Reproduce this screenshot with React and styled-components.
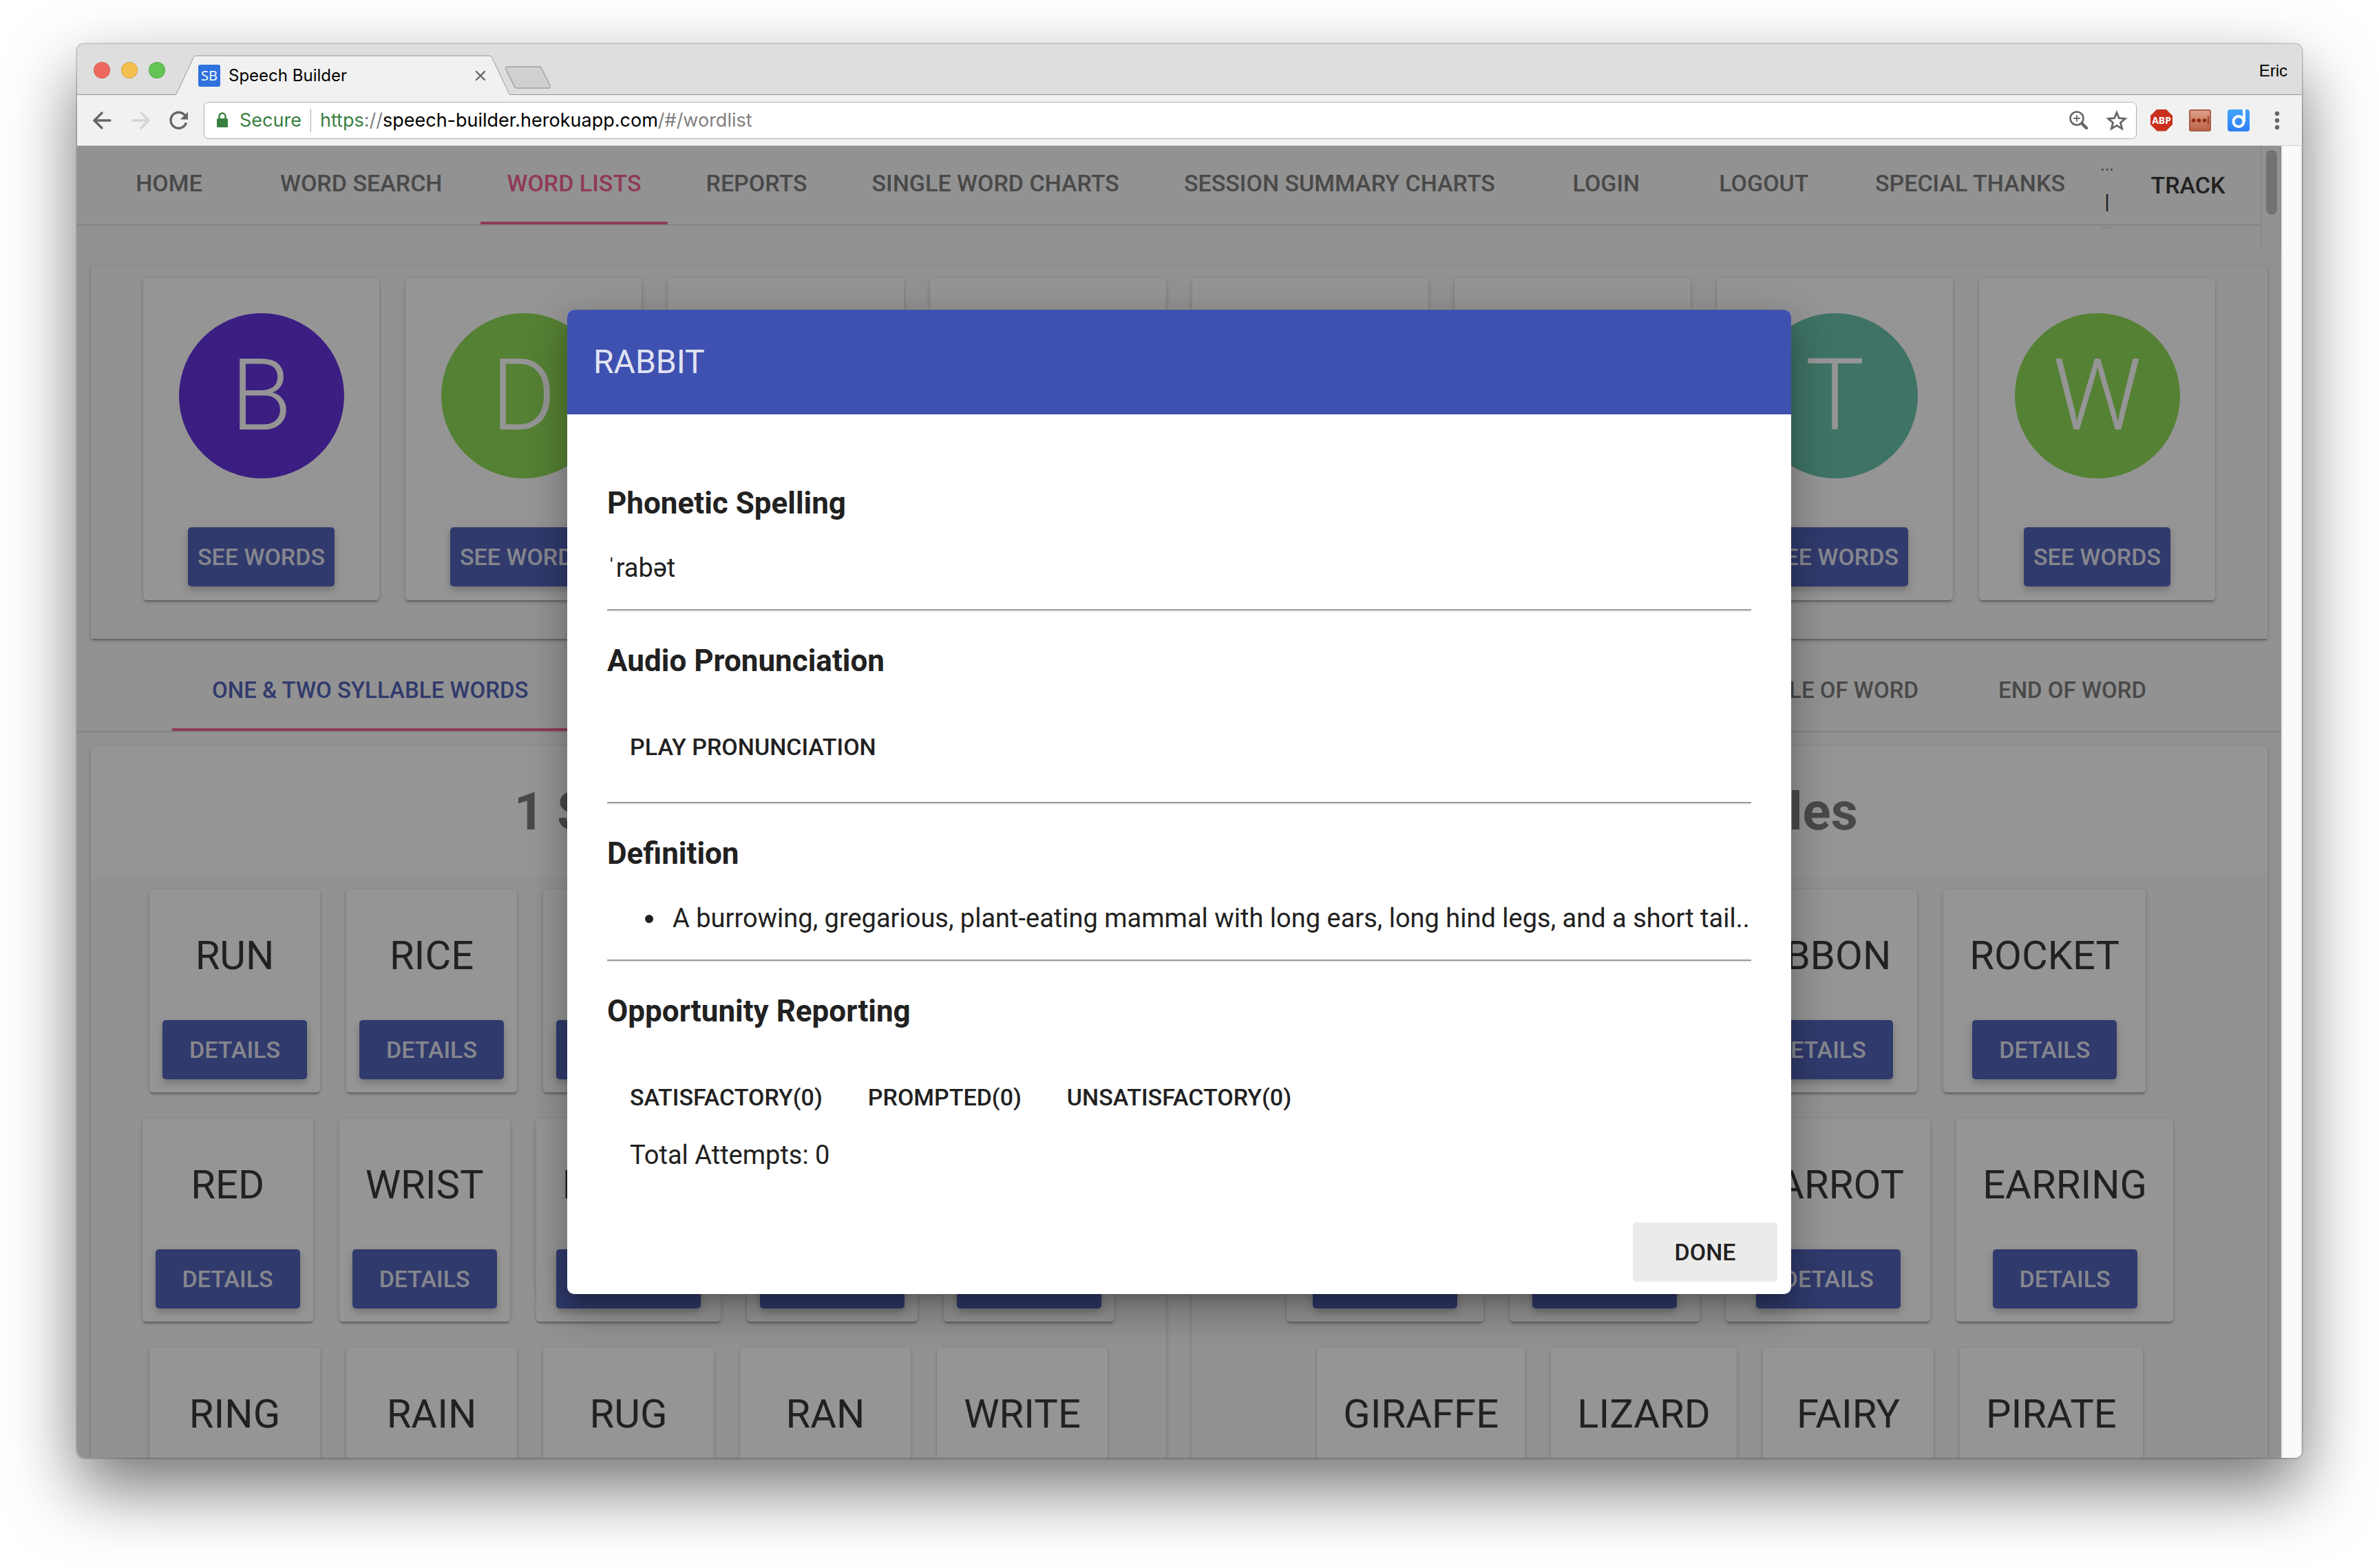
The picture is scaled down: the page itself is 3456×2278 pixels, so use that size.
import React from "react";
import styled, { createGlobalStyle, css } from "styled-components";

const color = {
  primary: "#3f51b0",
  accent: "#f45288",
  page: "#fafafa",
  ink: "#212121",
  muted: "#6e6e6e",
  rule: "#dcdcdc",
};

const shadow = {
  card: "0 2px 7px rgba(0,0,0,.2), 0 2px 2px rgba(0,0,0,.14), 0 5px 2px -2px rgba(0,0,0,.12)",
  button: "0 5px 12px rgba(0,0,0,.26)",
  dialog:
    "0 17px 19px -10px rgba(0,0,0,.2), 0 31px 46px 5px rgba(0,0,0,.14), 0 12px 58px 10px rgba(0,0,0,.12)",
};

const GlobalStyle = createGlobalStyle`
  *, *::before, *::after { box-sizing: border-box; }
  body {
    margin: 0;
    background: #fff;
    color: ${color.ink};
    font-family: Roboto, "Liberation Sans", sans-serif;
  }
  button, input { font: inherit; color: inherit; border: 0; background: none; padding: 0; margin: 0; }
  button { cursor: pointer; }
  a { color: inherit; text-decoration: none; }
  h1, h2, h3, p, ul { margin: 0; padding: 0; font-weight: inherit; }
`;

/* ---------- browser window ---------- */

const Desktop = styled.div`
  height: 100vh;
  padding: 64px 112px 160px;
  overflow: hidden;
`;

const Window = styled.div`
  height: 100%;
  display: flex;
  flex-direction: column;
  overflow: hidden;
  border-radius: 10px;
  background: #f1f1f1;
  box-shadow: 0 0 2px 1px rgba(0, 0, 0, 0.3), 0 44px 100px rgba(0, 0, 0, 0.55);
`;

const TabStrip = styled.div`
  display: flex;
  align-items: flex-end;
  height: 74px;
  padding: 0 21px 0 24px;
  background: #dedede;
  box-shadow: inset 0 -1px 0 #989898;
`;

const Lights = styled.div`
  display: flex;
  gap: 16px;
  align-self: center;
  padding: 2px 16px 0 0;
`;

const Light = styled.button`
  width: 24px;
  height: 24px;
  border-radius: 50%;
  background: ${(p) => p.$fill};
  border: 1px solid rgba(0, 0, 0, 0.12);
`;

const BrowserTab = styled.div`
  position: relative;
  display: flex;
  align-items: center;
  gap: 12px;
  width: 484px;
  height: 58px;
  padding: 2px 34px 0 32px;
  font-size: 24px;
  line-height: 28px;
  color: #000;
`;

const TabShape = styled.svg`
  position: absolute;
  inset: 0;
  width: 100%;
  height: 100%;
`;

const Favicon = styled.span`
  position: relative;
  width: 32px;
  height: 32px;
  border-radius: 3px;
  background: #2f72de;
  color: #fff;
  font: 20px/32px "Open Sans", sans-serif;
  text-align: center;
`;

const TabTitle = styled.span`
  position: relative;
  flex: 1;
  font-family: Inter, sans-serif;
`;

const IconButton = styled.button`
  position: relative;
  display: flex;
  align-items: center;
  justify-content: center;
  color: ${(p) => p.$tone || "#666"};
`;

const NewTab = styled(IconButton)`
  align-self: flex-end;
  margin: 0 0 8px -7px;
`;

const UserName = styled.button`
  margin-left: auto;
  align-self: center;
  padding-top: 4px;
  font: 24px/28px "Liberation Sans", sans-serif;
  color: #000;
`;

const Toolbar = styled.div`
  display: flex;
  align-items: center;
  height: 74px;
  padding: 0 20px;
  border-bottom: 1px solid #cfcfcf;
`;

const History = styled.div`
  display: flex;
  gap: 20px;
  padding-right: 20px;
`;

const AddressBar = styled.form`
  flex: 1;
  display: flex;
  align-items: center;
  height: 54px;
  padding: 0 12px 0 17px;
  border: 1px solid #b0b0b0;
  border-radius: 7px;
  background: #fff;
  font: 27px/34px Inter, sans-serif;
`;

const Secure = styled.span`
  display: flex;
  align-items: center;
  gap: 16px;
  padding-right: 13px;
  border-right: 1px solid #a8a8a8;
  margin-right: 13px;
  color: #38803f;
`;

const UrlLabel = styled.label`
  color: #808080;
`;

const Origin = styled.span`
  color: ${(p) => (p.$scheme ? "#38803f" : "#000")};
`;

const UrlInput = styled.input`
  flex: 1;
  min-width: 0;
  color: #808080;
  outline: 0;
`;

const AddressActions = styled.div`
  display: flex;
  gap: 24px;
`;

const Extensions = styled.div`
  display: flex;
  align-items: center;
  gap: 24px;
  padding-left: 20px;
`;

const Abp = styled(IconButton)`
  width: 32px;
  height: 32px;
  clip-path: polygon(30% 0, 70% 0, 100% 30%, 100% 70%, 70% 100%, 30% 100%, 0 70%, 0 30%);
  background: #c9301c;
  color: #fff;
  font: bold 14px/32px "Noto Sans", sans-serif;
`;

const Menu = styled(IconButton)`
  width: 32px;
`;

/* ---------- page ---------- */

const Viewport = styled.div`
  position: relative;
  flex: 1;
  min-height: 0;
  display: flex;
  overflow: hidden;
  background: ${color.page};
`;

const Page = styled.div`
  position: relative;
  flex: 1;
  min-width: 0;
  overflow: hidden;
  background: ${color.page};
`;

const OuterTrack = styled.div`
  width: 30px;
  border-left: 2px solid #e8e8e8;
  border-right: 2px solid #ececec;
  background: ${color.page};
`;

const TopRow = styled.header`
  display: flex;
  align-items: flex-start;
`;

const tabBar = css`
  display: flex;
  height: 116px;
  border-bottom: 2px solid ${color.rule};
`;

const NavBar = styled.nav`
  ${tabBar}
  flex: 1;
  min-width: 0;
  gap: 18px;
  padding-left: 28px;
`;

const tabItem = css`
  display: flex;
  align-items: center;
  justify-content: center;
  flex: none;
  height: 114px;
  border-bottom: 4px solid ${(p) => (p.$active ? color.accent : "transparent")};
  font-weight: 500;
  line-height: 40px;
  white-space: nowrap;
`;

const NavLink = styled.a`
  ${tabItem}
  min-width: 211px;
  padding: 0 38px 2px;
  font-size: 34px;
  color: ${(p) => (p.$active ? color.accent : color.muted)};
`;

const MiniNav = styled.div`
  flex: none;
  width: 16px;
  height: 120px;
  margin: 0 -14px 0 -3px;
  padding-top: 10px;
  border-bottom: 2px solid ${color.rule};
  text-align: center;
  font-size: 30px;
  font-weight: 500;
`;

const MiniLink = styled.a`
  display: flex;
  justify-content: center;
  height: 56px;
  line-height: 36px;
  font-size: 24px;
  color: ${color.muted};
`;

const Divider = styled.span`
  display: block;
  line-height: 30px;
`;

const TrackButton = styled.button`
  flex: none;
  width: 211px;
  height: 114px;
  margin-left: auto;
  font-size: 34px;
  font-weight: 500;
  line-height: 40px;
`;

const InnerTrack = styled.div`
  flex: none;
  width: 30px;
  height: 154px;
  padding: 6px 0 0 6px;
  border-left: 2px solid #ececec;
  border-right: 2px solid #ececec;
`;

const Thumb = styled.div`
  width: 16px;
  height: 94px;
  border-radius: 8px;
  background: #bdbdbd;
`;

const LetterPanel = styled.section`
  display: grid;
  grid-template-columns: repeat(8, 1fr);
  gap: 38px;
  margin: 20px 20px 0;
  padding: 18px 76px 56px;
  box-shadow: ${shadow.card};
`;

const Card = styled.article`
  display: flex;
  flex-direction: column;
  align-items: center;
  border-radius: 5px;
  background: #fff;
  box-shadow: ${shadow.card};
`;

const LetterCard = styled(Card)`
  gap: 71px;
  padding: 51px 0 20px;
`;

const Letter = styled.h2`
  width: 240px;
  border-radius: 50%;
  background: ${(p) => p.$fill};
  color: #fff;
  font-size: 144px;
  font-weight: 300;
  line-height: 240px;
  text-align: center;
`;

const RaisedButton = styled.button`
  min-width: 210px;
  padding: 0 14px;
  border-radius: 5px;
  background: ${color.primary};
  box-shadow: ${shadow.button};
  color: rgba(255, 255, 255, 0.87);
  font-size: 34px;
  font-weight: 500;
  line-height: 86px;
  white-space: nowrap;
`;

const FilterTabs = styled.nav`
  ${tabBar}
  justify-content: space-between;
  margin-top: 20px;
  padding: 0 138px;
`;

const TabGroup = styled.div`
  display: flex;
`;

const FilterTab = styled.button`
  ${tabItem}
  padding: 0 58px;
  border-bottom: 4px solid ${(p) => (p.$active ? color.accent : "transparent")};
  font-size: 33px;
  color: ${(p) => (p.$active ? color.primary : color.muted)};
`;

const Lists = styled.main`
  display: grid;
  grid-template-columns: 1fr 1fr;
  gap: 38px;
  margin: 20px 20px 0;
`;

const ListPanel = styled.section`
  border-radius: 5px;
  box-shadow: ${shadow.card};
`;

const ListTitle = styled.h2`
  background: #fff;
  color: ${color.muted};
  font-size: 76px;
  font-weight: 700;
  line-height: 190px;
  text-align: center;
`;

const WordRows = styled.div`
  display: flex;
  flex-direction: column;
  gap: 38px;
  padding: 18px 0 38px;
`;

const WordRow = styled.div`
  display: flex;
  justify-content: center;
  gap: 38px;
`;

const WordCard = styled(Card)`
  gap: 60px;
  padding: 62px 19px 19px;
`;

const Word = styled.h3`
  padding: 0 19px;
  font-size: 58px;
  line-height: 68px;
`;

/* ---------- dialog ---------- */

const Backdrop = styled.div`
  position: absolute;
  inset: 0;
  display: flex;
  align-items: center;
  justify-content: center;
  background: rgba(33, 33, 33, 0.48);
`;

const Dialog = styled.div`
  width: 1778px;
  max-width: 90%;
  overflow: hidden;
  border-radius: 10px;
  background: #fff;
  box-shadow: ${shadow.dialog};
`;

const DialogTitle = styled.h1`
  padding: 0 38px;
  background: ${color.primary};
  color: rgba(255, 255, 255, 0.87);
  font-size: 48px;
  line-height: 152px;
`;

const DialogBody = styled.div`
  padding: 58px 58px 0;
`;

const Section = styled.section`
  padding: 45px 0 37px;

  & + & {
    border-top: 2px solid #9a9a9a;
    box-shadow: inset 0 2px 0 #eee;
    padding-top: 47px;
  }
`;

const SectionTitle = styled.h3`
  margin-bottom: 45px;
  font-size: 44px;
  font-weight: 700;
  line-height: 53px;
`;

const Text = styled.p`
  font-size: 38px;
  line-height: 45px;
`;

const Definitions = styled.ul`
  padding-left: 55px;
  font-size: 38px;
  line-height: 45px;
  list-style: none;
`;

const Definition = styled.li`
  display: flex;
  align-items: center;
  gap: 28px;
  white-space: nowrap;

  &::before {
    content: "";
    width: 12px;
    height: 12px;
    border-radius: 50%;
    background: ${color.ink};
  }
`;

const FlatRow = styled.div`
  display: flex;
  gap: 38px;
  padding: 10px 19px 0;
`;

const FlatButton = styled.button`
  min-width: 210px;
  padding: 0 14px;
  border-radius: 5px;
  background: ${(p) => (p.$filled ? "#ebebeb" : "transparent")};
  font-size: 34px;
  font-weight: 500;
  line-height: 86px;
`;

const Attempts = styled(Text)`
  padding: 19px 33px 0;
`;

const DialogActions = styled.footer`
  display: flex;
  justify-content: flex-end;
  padding: 38px 20px 18px;
`;

/* ---------- icons ---------- */

const Stroke = ({ w, h, children, sw = 3.4 }) => (
  <svg
    width={w}
    height={h}
    viewBox={`0 0 ${w} ${h}`}
    fill="none"
    stroke="currentColor"
    strokeWidth={sw}
    strokeLinecap="round"
  >
    {children}
  </svg>
);

const BackIcon = () => (
  <Stroke w={36} h={32}>
    <path d="M28 16H5M16 5 5 16l11 11" />
  </Stroke>
);
const ForwardIcon = () => (
  <Stroke w={36} h={32}>
    <path d="M5 16h23M17 5l11 11-11 11" />
  </Stroke>
);
const ReloadIcon = () => (
  <Stroke w={32} h={32}>
    <path d="M26 20.5A11.500 11.500 0 1 1 24.500 8.500" />
    <path d="M29 3.500v11H18z" fill="currentColor" stroke="none" />
  </Stroke>
);
const LockIcon = () => (
  <svg width="18" height="24" viewBox="0 0 18 24" fill="none">
    <rect x="1" y="9" width="16" height="13" rx="1.5" fill="currentColor" />
    <path d="M4.5 9.5V6a4.5 4.5 0 0 1 9 0v3.5" stroke="currentColor" strokeWidth="2.4" />
  </svg>
);
const ZoomIcon = () => (
  <Stroke w={30} h={30} sw={2.6}>
    <circle cx="12" cy="12" r="9.5" />
    <path d="M12 8v8M8 12h8" strokeWidth="1.8" />
    <path d="m20 20 6 6" strokeWidth="4.4" />
  </Stroke>
);
const StarIcon = () => (
  <Stroke w={32} h={32} sw={2.8}>
    <path d="m16 4.5 3.400 8.200 8.900.7-6.800 5.800 2.100 8.700L16 23.300l-7.600 4.600 2.100-8.700-6.800-5.800 8.900-.7z" />
  </Stroke>
);
const DotsBadge = () => (
  <svg width="32" height="32" viewBox="0 0 32 32">
    <defs>
      <linearGradient id="clay" x1="0" y1="0" x2="0" y2="1">
        <stop offset="0" stopColor="#dfa18a" />
        <stop offset="1" stopColor="#bb6048" />
      </linearGradient>
    </defs>
    <rect x="1" y="1" width="30" height="30" rx="2" fill="url(#clay)" stroke="#a85c48" strokeWidth="2" />
    <g fill="#8e2a0c">
      <circle cx="6.5" cy="16" r="2.8" />
      <circle cx="14.5" cy="16" r="2.8" />
      <circle cx="22.5" cy="16" r="2.8" />
      <rect x="27" y="10" width="1.6" height="12" />
    </g>
  </svg>
);
const BlueBadge = () => (
  <svg width="32" height="32" viewBox="0 0 32 32" fill="none">
    <defs>
      <linearGradient id="sky" x1="0" y1="0" x2="0" y2="1">
        <stop offset="0" stopColor="#3fa6f8" />
        <stop offset="1" stopColor="#2f7df6" />
      </linearGradient>
    </defs>
    <rect width="32" height="32" rx="4" fill="url(#sky)" />
    <circle cx="16" cy="17.5" r="7.5" stroke="#fff" strokeWidth="4" />
    <path d="M24 0v18" stroke="#fff" strokeWidth="4" />
  </svg>
);
const MenuIcon = () => (
  <svg width="32" height="32" fill="currentColor">
    <circle cx="16" cy="6" r="3.2" />
    <circle cx="16" cy="16" r="3.2" />
    <circle cx="16" cy="26" r="3.2" />
  </svg>
);

/* ---------- data ---------- */

const navItems = [
  "HOME",
  "WORD SEARCH",
  "WORD LISTS",
  "REPORTS",
  "SINGLE WORD CHARTS",
  "SESSION SUMMARY CHARTS",
  "LOGIN",
  "LOGOUT",
  "SPECIAL THANKS",
];

const letters = [
  ["B", "#531cda"],
  ["D", "#84d845"],
  ["K", "#58bfa4"],
  ["L", "#84d845"],
  ["R", "#531cda"],
  ["S", "#84d845"],
  ["T", "#58bfa4"],
  ["W", "#84d845"],
];

const wordLists = [
  {
    title: "1 Syllable",
    rows: [
      ["RUN", "RICE", "RAKE", "ROAD", "READ"],
      ["RED", "WRIST", "ROUND", "RAT", "ROPE"],
      ["RING", "RAIN", "RUG", "RAN", "WRITE"],
    ],
  },
  {
    title: "2 Syllables",
    rows: [
      ["RADIO", "RABBIT", "RIBBON", "ROCKET"],
      ["FOREST", "ARROW", "CARROT", "EARRING"],
      ["GIRAFFE", "LIZARD", "FAIRY", "PIRATE"],
    ],
  },
];

const outcomes = ["SATISFACTORY(0)", "PROMPTED(0)", "UNSATISFACTORY(0)"];

/* ---------- parts ---------- */

function BrowserChrome() {
  return (
    <>
      <TabStrip>
        <Lights>
          <Light aria-label="Close window" $fill="#ee6a5e" />
          <Light aria-label="Minimise window" $fill="#f5bf4f" />
          <Light aria-label="Zoom window" $fill="#62c554" />
        </Lights>
        <BrowserTab>
          <TabShape viewBox="0 0 484 58" preserveAspectRatio="none">
            <path d="M0 57 25 4q1-3 4-3h426q3 0 4 3l25 53v1H0z" fill="#f1f1f1" />
            <path d="M0 57 25 4q1-3 4-3h426q3 0 4 3l25 53" fill="none" stroke="#989898" />
          </TabShape>
          <Favicon>SB</Favicon>
          <TabTitle>Speech Builder</TabTitle>
          <IconButton aria-label="Close tab">
            <Stroke w={16} h={16} sw={2.4}>
              <path d="m2 2 12 12M14 2 2 14" />
            </Stroke>
          </IconButton>
        </BrowserTab>
        <NewTab aria-label="New tab">
          <svg width="68" height="34" viewBox="0 0 68 34">
            <path
              d="M4 1h46q3 0 4 3l12 24q1 4-2 4H18q-3 0-4-3L2 5q-1-4 2-4z"
              fill="#d0d0d0"
              stroke="#a0a0a0"
              strokeWidth="1.4"
            />
          </svg>
        </NewTab>
        <UserName>Eric</UserName>
      </TabStrip>
      <Toolbar>
        <History>
          <IconButton aria-label="Back">
            <BackIcon />
          </IconButton>
          <IconButton aria-label="Forward" $tone="#d4d4d4">
            <ForwardIcon />
          </IconButton>
          <IconButton aria-label="Reload">
            <ReloadIcon />
          </IconButton>
        </History>
        <AddressBar onSubmit={(e) => e.preventDefault()}>
          <Secure>
            <LockIcon />
            Secure
          </Secure>
          <UrlLabel htmlFor="path">
            <Origin $scheme>https</Origin>://<Origin>speech-builder.herokuapp.com</Origin>
          </UrlLabel>
          <UrlInput id="path" defaultValue="/#/wordlist" />
          <AddressActions>
            <IconButton type="button" aria-label="Page zoom">
              <ZoomIcon />
            </IconButton>
            <IconButton type="button" aria-label="Bookmark this page">
              <StarIcon />
            </IconButton>
          </AddressActions>
        </AddressBar>
        <Extensions>
          <Abp>ABP</Abp>
          <IconButton aria-label="Passwords">
            <DotsBadge />
          </IconButton>
          <IconButton aria-label="Shortcuts">
            <BlueBadge />
          </IconButton>
          <Menu aria-label="Menu">
            <MenuIcon />
          </Menu>
        </Extensions>
      </Toolbar>
    </>
  );
}

function RabbitDialog() {
  return (
    <Dialog role="dialog" aria-modal="true" aria-labelledby="dialog-title">
      <DialogTitle id="dialog-title">RABBIT</DialogTitle>
      <DialogBody>
        <Section>
          <SectionTitle>Phonetic Spelling</SectionTitle>
          <Text>ˈrabət</Text>
        </Section>
        <Section>
          <SectionTitle>Audio Pronunciation</SectionTitle>
          <FlatRow>
            <FlatButton>PLAY PRONUNCIATION</FlatButton>
          </FlatRow>
        </Section>
        <Section>
          <SectionTitle>Definition</SectionTitle>
          <Definitions>
            <Definition>
              A burrowing, gregarious, plant-eating mammal with long ears, long hind legs, and a short tail..
            </Definition>
          </Definitions>
        </Section>
        <Section>
          <SectionTitle>Opportunity Reporting</SectionTitle>
          <FlatRow>
            {outcomes.map((label) => (
              <FlatButton key={label}>{label}</FlatButton>
            ))}
          </FlatRow>
          <Attempts>Total Attempts: 0</Attempts>
        </Section>
      </DialogBody>
      <DialogActions>
        <FlatButton $filled>DONE</FlatButton>
      </DialogActions>
    </Dialog>
  );
}

export default function App() {
  return (
    <Desktop>
      <GlobalStyle />
      <Window>
        <BrowserChrome />
        <Viewport>
          <Page>
            <TopRow>
              <NavBar>
                {navItems.map((item) => (
                  <NavLink key={item} href="#/" $active={item === "WORD LISTS"}>
                    {item}
                  </NavLink>
                ))}
                <MiniNav>
                  <MiniLink href="#/">...</MiniLink>
                  <Divider>|</Divider>
                </MiniNav>
                <TrackButton>TRACK</TrackButton>
              </NavBar>
              <InnerTrack>
                <Thumb />
              </InnerTrack>
            </TopRow>
            <LetterPanel>
              {letters.map(([letter, fill]) => (
                <LetterCard key={letter}>
                  <Letter $fill={fill}>{letter}</Letter>
                  <RaisedButton>SEE WORDS</RaisedButton>
                </LetterCard>
              ))}
            </LetterPanel>
            <FilterTabs>
              <TabGroup>
                <FilterTab $active>ONE &amp; TWO SYLLABLE WORDS</FilterTab>
              </TabGroup>
              <TabGroup>
                <FilterTab>MIDDLE OF WORD</FilterTab>
                <FilterTab>END OF WORD</FilterTab>
              </TabGroup>
            </FilterTabs>
            <Lists>
              {wordLists.map((list) => (
                <ListPanel key={list.title}>
                  <ListTitle>{list.title}</ListTitle>
                  <WordRows>
                    {list.rows.map((row) => (
                      <WordRow key={row[0]}>
                        {row.map((word) => (
                          <WordCard key={word}>
                            <Word>{word}</Word>
                            <RaisedButton>DETAILS</RaisedButton>
                          </WordCard>
                        ))}
                      </WordRow>
                    ))}
                  </WordRows>
                </ListPanel>
              ))}
            </Lists>
            <Backdrop>
              <RabbitDialog />
            </Backdrop>
          </Page>
          <OuterTrack />
        </Viewport>
      </Window>
    </Desktop>
  );
}
